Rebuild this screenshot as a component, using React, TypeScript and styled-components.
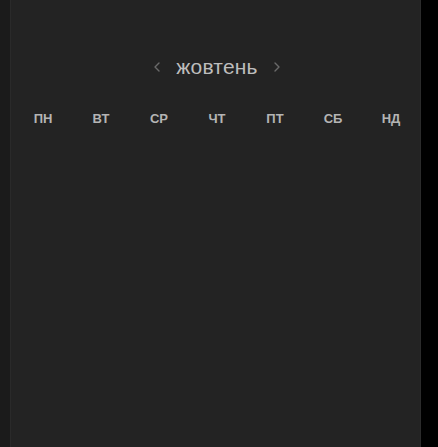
import React from "react";
import styled, { createGlobalStyle } from "styled-components";

const Global = createGlobalStyle`
  html, body { margin: 0; padding: 0; background: #000; }
  body { font-family: "Liberation Sans", Arial, sans-serif; }
`;

const Screen = styled.div`
  display: flex;
  height: 447px;
  width: 438px;
  background: #000;
`;

const SideStrip = styled.div`
  width: 10px;
  background: #1b1b1b;
  border-right: 1px solid #2a2a2a;
`;

const Panel = styled.div`
  width: 410px;
  background: #232323;
  border-right: 1px solid #2b2b2b;
  display: flex;
  flex-direction: column;
  padding-top: 54px;
  box-sizing: border-box;
`;

const MonthBar = styled.div`
  display: flex;
  align-items: center;
  justify-content: center;
  gap: 15px;
  height: 26px;
  padding-left: 3px;
`;

const Chevron = styled.button`
  background: none;
  border: none;
  padding: 0;
  color: #6a6a6a;
  display: flex;
  align-items: center;
  cursor: pointer;
`;

const MonthTitle = styled.span`
  font-size: 21px;
  color: #bdbdbd;
  letter-spacing: 0.2px;
`;

const WeekRow = styled.div`
  display: grid;
  grid-template-columns: repeat(7, 1fr);
  margin-top: 31px;
  padding: 0 0 0 3px;
`;

const WeekDay = styled.div`
  text-align: center;
  font-size: 13px;
  font-weight: 700;
  color: #b4b4b4;
  line-height: 15px;
`;

const Arrow = ({ dir }: { dir: "l" | "r" }) => (
  <svg width="8" height="12" viewBox="0 0 8 12" fill="none">
    <path
      d={dir === "l" ? "M6 2 L2 6 L6 10" : "M2 2 L6 6 L2 10"}
      stroke="currentColor"
      strokeWidth="1.4"
      strokeLinecap="round"
      strokeLinejoin="round"
    />
  </svg>
);

const days = ["ПН", "ВТ", "СР", "ЧТ", "ПТ", "СБ", "НД"];

export default function App() {
  return (
    <>
      <Global />
      <Screen>
        <SideStrip />
        <Panel>
          <MonthBar>
            <Chevron aria-label="prev"><Arrow dir="l" /></Chevron>
            <MonthTitle>жовтень</MonthTitle>
            <Chevron aria-label="next"><Arrow dir="r" /></Chevron>
          </MonthBar>
          <WeekRow>
            {days.map((d) => (
              <WeekDay key={d}>{d}</WeekDay>
            ))}
          </WeekRow>
        </Panel>
      </Screen>
    </>
  );
}
